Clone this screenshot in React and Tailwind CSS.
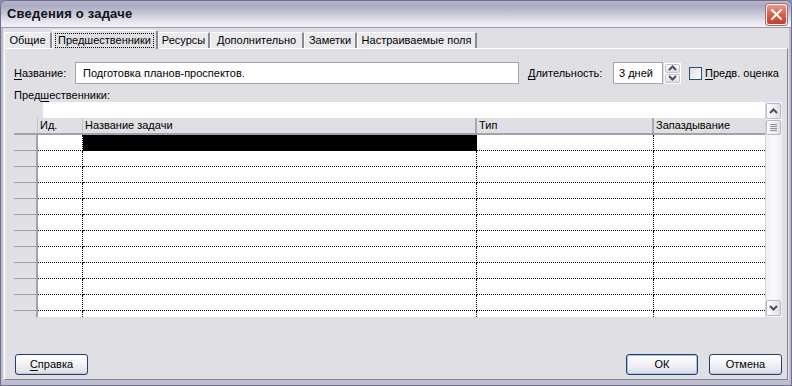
import React from 'react';

const tabs = [
  { label: 'Общие', w: 'w-[48px]' },
  { label: 'Предшественники', w: 'w-[106px]', active: true },
  { label: 'Ресурсы', w: 'w-[52px]' },
  { label: 'Дополнительно', w: 'w-[94px]' },
  { label: 'Заметки', w: 'w-[53px]' },
  { label: 'Настраиваемые поля', w: 'w-[120px]' },
];

function U({ children }) {
  return <span className="underline underline-offset-[2px] decoration-[1px]">{children}</span>;
}

function Chevron({ down }) {
  return (
    <svg width="9" height="6" viewBox="0 0 9 6">
      <polyline
        points={down ? '1,1 4.5,4.5 8,1' : '1,5 4.5,1.5 8,5'}
        fill="none"
        stroke="#4d4d5c"
        strokeWidth="2"
      />
    </svg>
  );
}

function XpButton({ children, w, isDefault }) {
  return (
    <div
      className={`${w} h-[21px] rounded-[3px] border border-[#1f3f6e] bg-[linear-gradient(to_bottom,#ffffff_0%,#f4f4f8_40%,#dcdce6_100%)] flex items-center justify-center text-[11px] text-black ${
        isDefault ? 'shadow-[inset_0_0_0_1px_#a9c1ec]' : 'shadow-[inset_0_-1px_0_#c6c5d7]'
      }`}
    >
      {children}
    </div>
  );
}

export default function App() {
  const rows = Array.from({ length: 12 });
  return (
    <div className="w-[792px] h-[386px] overflow-hidden bg-[#8d8daa] font-['Liberation_Sans',Arial,sans-serif] text-black">
      <div className="w-full h-full rounded-t-[7px] border border-[#6e6e8c] flex flex-col bg-[#c7c7d6]">
        {/* title bar */}
        <div className="h-[27px] shrink-0 flex items-center justify-between pl-[6px] pr-[4px] rounded-t-[6px] bg-[linear-gradient(to_bottom,#b9b9cc_0%,#a9a9c1_18%,#c4c4d4_45%,#e6e6ee_80%,#f2f2f7_100%)] border-b border-[#9a9ab3]">
          <span className="text-[13px] font-bold tracking-[0.2px] text-[#111]">Сведения о задаче</span>
          <div className="w-[21px] h-[21px] rounded-[3px] border border-white bg-[linear-gradient(to_bottom,#e99a8a_0%,#d8614c_50%,#c2412c_100%)] shadow-[0_0_0_1px_#b66] flex items-center justify-center">
            <svg width="11" height="11" viewBox="0 0 11 11">
              <path d="M1 1 L10 10 M10 1 L1 10" stroke="#fff" strokeWidth="2" strokeLinecap="square" />
            </svg>
          </div>
        </div>

        {/* body */}
        <div className="flex-1 border-x-[2px] border-b-[5px] border-[#bebed0] bg-[#e0dfe3] px-[1px] flex flex-col">
          {/* tabs */}
          <div className="mt-[2px] h-[18px] flex items-end text-[11px]">
            {tabs.map((t) =>
              t.active ? (
                <div
                  key={t.label}
                  className={`${t.w} h-[19px] -mb-[1px] relative z-10 bg-[#e0dfe3] border-l border-t border-white border-r-2 border-r-[#8a8a92] rounded-t-[2px] flex items-center justify-center`}
                >
                  <span className="outline outline-1 outline-dotted outline-black px-[2px] leading-[13px]">{t.label}</span>
                </div>
              ) : (
                <div
                  key={t.label}
                  className={`${t.w} h-[16px] bg-[#ebebef] border-l border-t border-white border-r-2 border-r-[#8a8a92] rounded-t-[2px] flex items-center justify-center`}
                >
                  {t.label}
                </div>
              )
            )}
          </div>

          {/* panel */}
          <div className="h-[332px] border border-t-white border-l-white border-r-[#85858f] border-b-[#85858f] bg-[#e0dfe3] pl-[9px] pr-[5px] pt-[13px] flex flex-col text-[11px]">
            {/* name row */}
            <div className="h-[22px] flex items-center">
              <div className="w-[61px]">
                <U>Н</U>азвание:
              </div>
              <div className="w-[444px] h-[22px] bg-white border border-[#a4a6ae] flex items-center pl-[7px]">
                Подготовка планов-проспектов.
              </div>
              <div className="w-[85px] ml-[9px]">
                <U>Д</U>лительность:
              </div>
              <div className="w-[50px] h-[22px] bg-white border border-[#a4a6ae] flex items-center pl-[5px]">3 дней</div>
              <div className="w-[17px] h-[21px] ml-[1px] flex flex-col gap-[1px] bg-white p-[1px]">
                <div className="flex-1 rounded-[2px] border border-[#c2c5d6] bg-[linear-gradient(to_bottom,#ffffff,#dcdce8)] flex items-center justify-center">
                  <Chevron />
                </div>
                <div className="flex-1 rounded-[2px] border border-[#c2c5d6] bg-[linear-gradient(to_bottom,#ffffff,#dcdce8)] flex items-center justify-center">
                  <Chevron down />
                </div>
              </div>
              <div className="w-[13px] h-[13px] ml-[8px] border border-[#1c5180] bg-[linear-gradient(135deg,#dcdcd7,#ffffff)]" />
              <div className="ml-[3px]">
                <U>П</U>редв. оценка
              </div>
            </div>

            <div className="mt-[4px] h-[14px] leading-[14px]">
              Пред<U>ш</U>ественники:
            </div>

            {/* table */}
            <div className="h-[215px] w-[768px] flex">
              <div className="w-[751px] flex flex-col overflow-hidden">
                <div className="h-[16px] shrink-0 flex">
                  <div className="w-[29px] bg-[#e0dfe3]" />
                  <div className="flex-1 bg-white" />
                </div>
                <div className="h-[17px] shrink-0 flex bg-[#e0dfe3] border-b-2 border-[#a2a2aa]">
                  <div className="w-[24px] border-r border-[#c4c4cc]" />
                  <div className="w-[45px] pl-[2px] border-r border-[#c4c4cc] leading-[15px]">Ид.</div>
                  <div className="w-[394px] pl-[2px] border-r-2 border-[#a8a8b0] leading-[15px]">Название задачи</div>
                  <div className="w-[177px] pl-[2px] border-r-2 border-[#a8a8b0] leading-[15px]">Тип</div>
                  <div className="flex-1 pl-[2px] leading-[15px]">Запаздывание</div>
                </div>
                <div className="flex-1 overflow-hidden bg-white">
                  {rows.map((_, i) => (
                    <div key={i} className="h-[16px] flex">
                      <div className="w-[24px] bg-[#e0dfe3] border-r-2 border-b border-r-[#a2a2aa] border-b-[#a2a2aa]" />
                      <div className="w-[45px] border-r border-b border-dotted border-black" />
                      <div className={`w-[394px] border-r border-b border-dotted border-black ${i === 0 ? 'bg-black' : ''}`} />
                      <div className="w-[177px] border-r border-b border-dotted border-black" />
                      <div className="flex-1 border-b border-dotted border-black" />
                    </div>
                  ))}
                </div>
              </div>

              {/* scrollbar */}
              <div className="w-[17px] border-l border-[#d4d4dc] bg-[linear-gradient(to_right,#f0f0f5,#fbfbfd_50%,#ececf2)] flex flex-col py-[1px] pr-[1px]">
                <div className="h-[16px] rounded-[2px] border border-[#b7b9c8] bg-[linear-gradient(to_right,#ffffff,#dedee8)] flex items-center justify-center">
                  <Chevron />
                </div>
                <div className="h-[15px] mt-[1px] rounded-[2px] border border-[#b7b9c8] bg-[linear-gradient(to_right,#ffffff,#dedee8)] flex flex-col items-center justify-center gap-[1px]">
                  <div className="w-[7px] h-[1px] bg-[#8d8da0]" />
                  <div className="w-[7px] h-[1px] bg-[#8d8da0]" />
                  <div className="w-[7px] h-[1px] bg-[#8d8da0]" />
                  <div className="w-[7px] h-[1px] bg-[#8d8da0]" />
                </div>
                <div className="flex-1" />
                <div className="h-[16px] rounded-[2px] border border-[#b7b9c8] bg-[linear-gradient(to_right,#ffffff,#dedee8)] flex items-center justify-center">
                  <Chevron down />
                </div>
              </div>
            </div>

            {/* buttons */}
            <div className="mt-[37px] flex items-center">
              <div className="ml-[1px]">
                <XpButton w="w-[73px]">
                  <U>С</U>правка
                </XpButton>
              </div>
              <div className="ml-auto flex gap-[11px]">
                <XpButton w="w-[72px]" isDefault>
                  ОК
                </XpButton>
                <XpButton w="w-[73px]">Отмена</XpButton>
              </div>
            </div>
          </div>
        </div>
      </div>
    </div>
  );
}
